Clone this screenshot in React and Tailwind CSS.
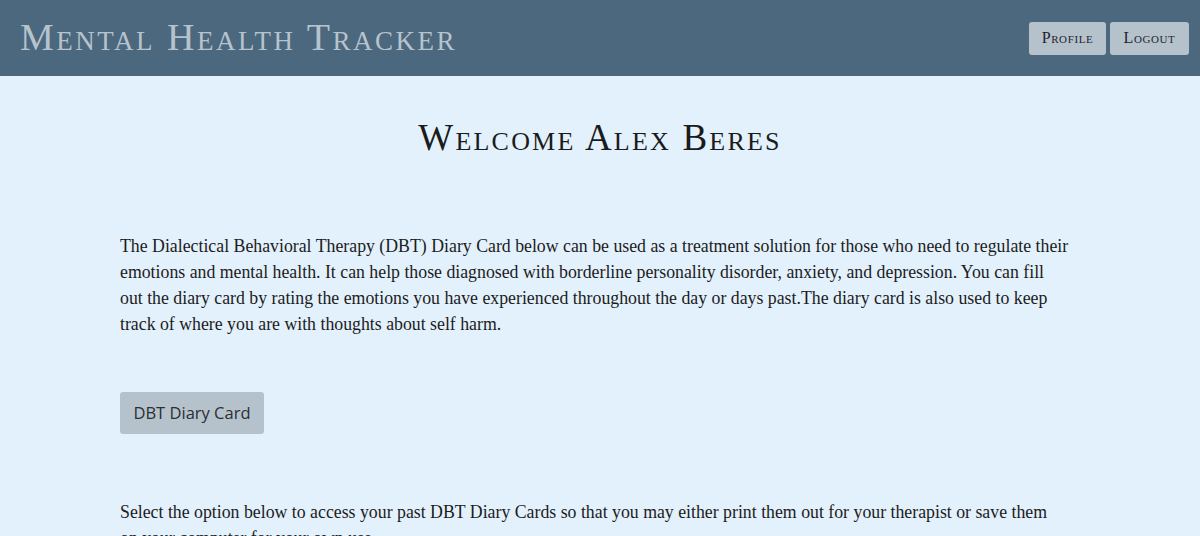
export default function App() {
  return (
    <div className="min-h-screen bg-[#e3f1fc]">
      {/* Header */}
      <header className="flex h-[76px] items-center justify-between bg-[#4b687e] pl-5 pr-[11px]">
        <h1 className="pb-[3px] font-['Liberation_Serif',serif] text-[38px] leading-none tracking-[2.5px] text-[#b7c3cc] [font-variant:small-caps]">
          Mental Health Tracker
        </h1>
        <div className="flex gap-1">
          <button className="h-[33px] w-[77px] rounded-[3px] bg-[#b6c2cb] font-['Liberation_Serif',serif] text-[16px] tracking-[0.6px] text-[#1d2430] [font-variant:small-caps]">
            Profile
          </button>
          <button className="h-[33px] w-[79px] rounded-[3px] bg-[#b6c2cb] font-['Liberation_Serif',serif] text-[16px] tracking-[0.6px] text-[#1d2430] [font-variant:small-caps]">
            Logout
          </button>
        </div>
      </header>

      {/* Main */}
      <main className="mx-auto w-[960px]">
        <h2 className="pt-[42px] text-center font-['Liberation_Serif',serif] text-[37px] leading-[40px] tracking-[2.2px] text-[#1b1b1b] [font-variant:small-caps]">
          Welcome Alex Beres
        </h2>

        <p className="mt-[75px] font-['Liberation_Serif',serif] text-[17.8px] leading-[26px] text-[#1c1c1c]">
          The Dialectical Behavioral Therapy (DBT) Diary Card below can be used as a treatment solution for those who need to regulate their
          <br />
          emotions and mental health. It can help those diagnosed with borderline personality disorder, anxiety, and depression. You can fill
          <br />
          out the diary card by rating the emotions you have experienced throughout the day or days past.The diary card is also used to keep
          <br />
          track of where you are with thoughts about self harm.
        </p>

        <button className="mt-[55px] h-[42px] w-[144px] rounded-[3px] bg-[#b6c2cb] font-['Open_Sans',sans-serif] text-[16.5px] text-[#2a2f35]">
          DBT Diary Card
        </button>

        <p className="mt-[65px] font-['Liberation_Serif',serif] text-[17.8px] leading-[26px] text-[#1c1c1c]">
          Select the option below to access your past DBT Diary Cards so that you may either print them out for your therapist or save them
          <br />
          on your computer for your own use.
        </p>
      </main>
    </div>
  );
}
